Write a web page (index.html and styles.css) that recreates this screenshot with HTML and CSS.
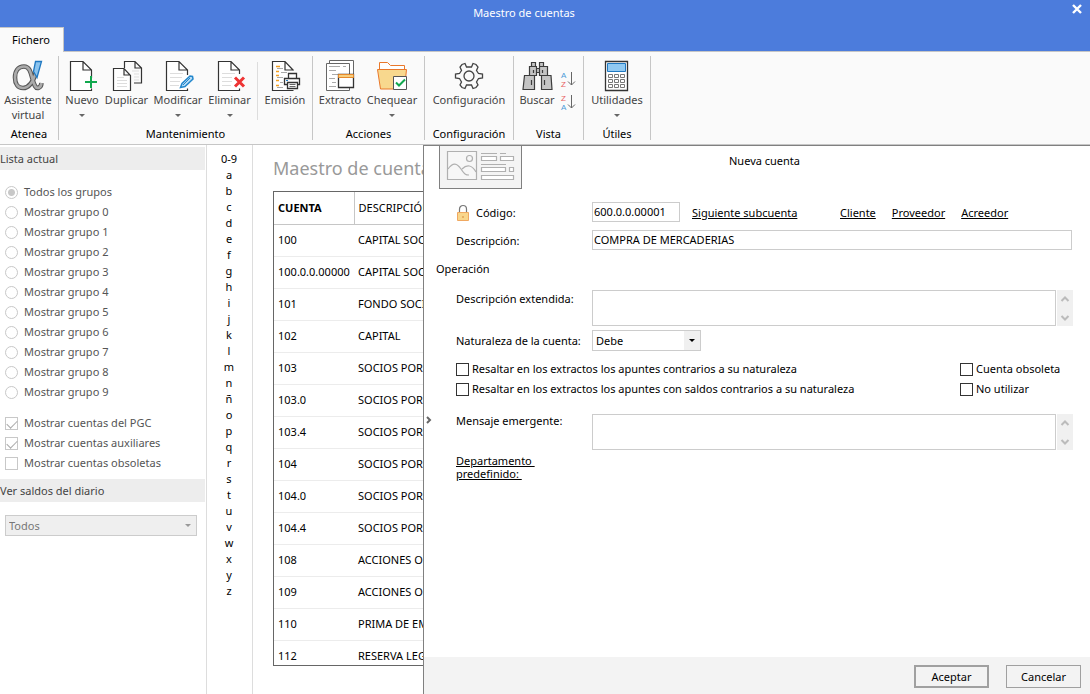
FILE: index.html
```html
<!DOCTYPE html>
<html lang="es">
<head>
<meta charset="utf-8">
<title>Maestro de cuentas</title>
<link rel="stylesheet" href="styles.css">
</head>
<body>
<header class="titlebar">
  <h1 class="window-title">Maestro de cuentas</h1>
  <button class="close" aria-label="Cerrar"><svg width="10" height="10" viewBox="0 0 10 10"><path d="M1 1l8 8M9 1L1 9" stroke="#fff" stroke-width="2.4"/></svg></button>
  <button class="tab">Fichero</button>
</header>

<nav class="ribbon">
  <section class="group g-atenea">
    <div class="tools">
      <button class="tool w-56">
        <svg class="icon" width="32" height="32" viewBox="0 0 32 32" fill="none"><path d="M24 12C22 19 18 28 11 28C6 28 3 24 3 17.500C3 11 6 6.500 12 6.500C20 6.500 19 19 23 26C25 29.500 29 28 29.500 23" stroke="#555" stroke-width="4.600"/><path d="M24 12C22 19 18 28 11 28C6 28 3 24 3 17.500C3 11 6 6.500 12 6.500C20 6.500 19 19 23 26C25 29.500 29 28 29.500 23" stroke="#aaa" stroke-width="2.600"/><path d="M23.500 1.500h6l-4.500 16-3.500-6z" fill="#8cc4ee" stroke="#1f78c1" stroke-width="1.300"/></svg>
        <span>Asistente<br>virtual</span></button>
    </div>
    <h2 class="group-name">Atenea</h2>
  </section>
  <section class="group g-mant">
    <div class="tools">
      <button class="tool w-44">
        <svg class="icon" width="32" height="32" viewBox="0 0 32 32" fill="none"><path d="M25.500 18V10L17 1.500H4.500v29h21v-2M17 2v8h8" stroke="#333" stroke-width="1.200" fill="#fff"/><path d="M25 16v12M19 22h12" stroke="#12a84e" stroke-width="2"/></svg>
        <span>Nuevo</span><i class="caret"></i></button>
      <button class="tool w-45">
        <svg class="icon" width="32" height="32" viewBox="0 0 32 32" fill="none"><path d="M13.500 8V1.500H24L30.500 8v15H23M24 2v6h6" stroke="#333" stroke-width="1.200"/><path d="M21 11h7M23 14h5M23 17h5M23 20h5" stroke="#ddd"/><path d="M2.500 8.500H13l6.500 7v15h-17zM13 9v6h6" stroke="#333" stroke-width="1.200" fill="#fff"/><path d="M6 17.500h7M6 20.500h10M6 23.500h10M6 26.500h10" stroke="#ddd"/></svg>
        <span>Duplicar</span></button>
      <button class="tool w-58">
        <svg class="icon" width="32" height="32" viewBox="0 0 32 32" fill="none"><path d="M25.500 15V10L17 1.500H4.500v29h21v-2M17 2v8h8" stroke="#333" stroke-width="1.200" fill="#fff"/><path d="M8 13.500h13M8 17.500h12M8 21.500h10M8 25.500h9" stroke="#ddd"/><path d="M18.500 27.500l1.500-4 8-7.500 2.500.5.500 2.500-8 7.500z" fill="#b9ddf6" stroke="#2387cc" stroke-width="1.500"/><path d="M21 25l7-7" stroke="#2387cc"/></svg>
        <span>Modificar</span><i class="caret"></i></button>
      <button class="tool w-45">
        <svg class="icon" width="32" height="32" viewBox="0 0 32 32" fill="none"><path d="M25.500 14V10L17 1.500H4.500v29h21v-2M17 2v8h8" stroke="#333" stroke-width="1.200" fill="#fff"/><path d="M8 13.500h13M8 17.500h10M8 21.500h10M8 25.500h9" stroke="#ddd"/><path d="M21 17.500l9 9M30 17.500l-9 9" stroke="#ee3333" stroke-width="3"/></svg>
        <span>Eliminar</span><i class="caret"></i></button>
      <span class="divider"></span>
      <button class="tool w-46">
        <svg class="icon" width="32" height="32" viewBox="0 0 32 32" fill="none"><path d="M24.500 10.500L16 1.500H3.500v29h21M16 2v8h8" stroke="#333" stroke-width="1.200" fill="#fff"/><path d="M7 6.500h4M7 11.500h3M7 15.500h3M7 20.500h3M7 25.500h3" stroke="#f4a021" stroke-width="1.500"/><path d="M8 8.500h6M12 12.500h6M8 17.500h6M11 22.500h3M8 27.500h6" stroke="#aaa"/><path d="M19.500 18v-4.500h8V18M19.500 24.500H15.500v-6h15v6h-3" stroke="#333" stroke-width="1.300" fill="#fff"/><path d="M18.500 22.500h10v6h-10z" fill="#fff" stroke="#333" stroke-width="1.300"/><path d="M20.500 24.500h6M20.500 26.500h6" stroke="#666"/><path d="M17 20.500h2" stroke="#1f78c1"/></svg>
        <span>Emisión</span></button>
    </div>
    <h2 class="group-name">Mantenimiento</h2>
  </section>
  <section class="group g-acc">
    <div class="tools">
      <button class="tool w-44">
        <svg class="icon" width="32" height="32" viewBox="0 0 32 32" fill="none"><path d="M5.500 3.500v-3h24v15M2.500 3.500h23v27h-23z" stroke="#666" fill="#fff"/><path d="M5 6.500h11M19 6.500h3M5 10.500h7M8 14.500h6M5 18.500h6M8 22.500h4M5 26.500h7" stroke="#aaa"/><path d="M14.500 14.500h15v13h-15z" fill="#fff" stroke="#333" stroke-width="1.300"/><path d="M14.500 14.500h15v3h-15z" fill="#f9cf7e" stroke="#e58a2e"/></svg>
        <span>Extracto</span></button>
      <button class="tool w-60">
        <svg class="icon" width="32" height="32" viewBox="0 0 32 32" fill="none"><path d="M3.500 10V2.500h8l3 3h14V10" fill="#fff" stroke="#e9782b"/><path d="M1.500 9.500h29l-2 19.500h-24z" fill="#f8d88e" stroke="#e9782b"/><path d="M17.500 16.500h13v13h-13z" fill="#fff" stroke="#555"/><path d="M20 22.500l3 3 6-6" stroke="#12a84e" stroke-width="2"/></svg>
        <span>Chequear</span><i class="caret"></i></button>
    </div>
    <h2 class="group-name">Acciones</h2>
  </section>
  <section class="group g-conf">
    <div class="tools">
      <button class="tool w-86">
        <svg class="icon" width="32" height="32" viewBox="0 0 32 32" fill="none" stroke="#444" stroke-width="1.300"><path d="M13.500 7L12 3.500 9 4.500l-2 2.500 1.500 3.500-2 3-4 .5v4l4 .5 2 3.500L7 25l2 2.500 3 1 1.500-3.500h5l1.500 3.500 3-1 2-2.500-1.500-3 2-3.500 4-.5v-4l-4-.5-2-3L25 7l-2-2.500-3-1L18.500 7z"/><circle cx="16" cy="16" r="5"/></svg>
        <span>Configuración</span></button>
    </div>
    <h2 class="group-name">Configuración</h2>
  </section>
  <section class="group g-vista">
    <div class="tools">
      <button class="tool w-44">
        <svg class="icon" width="32" height="32" viewBox="0 0 32 32" fill="#c4c4c4" stroke="#3c3c3c" stroke-width="1.200"><path d="M10.500 2.500h4v4h-4zM18.500 2.500h4v4h-4zM8.500 6.500h7v9h-7zM18.500 6.500h8v9h-8zM15.500 8.500h3v4h-3zM3.500 15.500l-1.500 14h11.500v-14zM20.500 15.500v14h10.500l-1-14z"/><path d="M12.500 10v3M21.500 10v3M10.500 20v5M23.500 20v5"/></svg>
        <span>Buscar</span></button>
      <span class="sorts">
        <button class="sort" aria-label="Orden ascendente"><svg width="16" height="19" viewBox="0 0 16 19"><text x="1" y="8" class="az blue">A</text><text x="1" y="17" class="az red">Z</text><path d="M11.500 2v13M8 11.500l3.500 3.500 3.500-3.500" stroke="#666" fill="none"/></svg></button>
        <button class="sort" aria-label="Orden descendente"><svg width="16" height="19" viewBox="0 0 16 19"><text x="1" y="8" class="az red">Z</text><text x="1" y="17" class="az blue">A</text><path d="M11.500 2v13M8 11.500l3.500 3.500 3.500-3.500" stroke="#666" fill="none"/></svg></button>
      </span>
    </div>
    <h2 class="group-name">Vista</h2>
  </section>
  <section class="group g-utiles">
    <div class="tools">
      <button class="tool w-62">
        <svg class="icon" width="32" height="32" viewBox="0 0 32 32" fill="none"><path d="M4.500 1.500h22v29h-22z" fill="#fff" stroke="#333" stroke-width="1.300"/><path d="M6.500 3.500h18v8h-18z" fill="#90c9f2" stroke="#1f78c1"/><path d="M7.500 14.500h4v3h-4zM13.500 14.500h4v3h-4zM19.500 14.500h4v3h-4zM7.500 19.500h4v3h-4zM13.500 19.500h4v3h-4zM19.500 19.500h4v3h-4zM7.500 24.500h4v3h-4zM13.500 24.500h4v3h-4zM19.500 24.500h4v3h-4z" stroke="#777"/></svg>
        <span>Utilidades</span><i class="caret"></i></button>
    </div>
    <h2 class="group-name">Útiles</h2>
  </section>
</nav>

<main class="workspace">
  <aside class="sidebar">
    <h2 class="side-head">Lista actual</h2>
    <div class="options">
      <label><input type="radio" name="g" checked disabled>Todos los grupos</label>
      <label><input type="radio" name="g" disabled>Mostrar grupo 0</label>
      <label><input type="radio" name="g" disabled>Mostrar grupo 1</label>
      <label><input type="radio" name="g" disabled>Mostrar grupo 2</label>
      <label><input type="radio" name="g" disabled>Mostrar grupo 3</label>
      <label><input type="radio" name="g" disabled>Mostrar grupo 4</label>
      <label><input type="radio" name="g" disabled>Mostrar grupo 5</label>
      <label><input type="radio" name="g" disabled>Mostrar grupo 6</label>
      <label><input type="radio" name="g" disabled>Mostrar grupo 7</label>
      <label><input type="radio" name="g" disabled>Mostrar grupo 8</label>
      <label><input type="radio" name="g" disabled>Mostrar grupo 9</label>
    </div>
    <div class="options filters">
      <label><input type="checkbox" checked disabled>Mostrar cuentas del PGC</label>
      <label><input type="checkbox" checked disabled>Mostrar cuentas auxiliares</label>
      <label><input type="checkbox" disabled>Mostrar cuentas obsoletas</label>
    </div>
    <h2 class="side-head" id="saldos">Ver saldos del diario</h2>
    <div class="combo side-combo">
      <select aria-labelledby="saldos" disabled><option>Todos</option></select><i class="caret"></i>
    </div>
  </aside>

  <nav class="letters" aria-label="Índice">
    <a href="#">0-9</a><a href="#">a</a><a href="#">b</a><a href="#">c</a><a href="#">d</a><a href="#">e</a><a href="#">f</a><a href="#">g</a><a href="#">h</a><a href="#">i</a><a href="#">j</a><a href="#">k</a><a href="#">l</a><a href="#">m</a><a href="#">n</a><a href="#">ñ</a><a href="#">o</a><a href="#">p</a><a href="#">q</a><a href="#">r</a><a href="#">s</a><a href="#">t</a><a href="#">u</a><a href="#">v</a><a href="#">w</a><a href="#">x</a><a href="#">y</a><a href="#">z</a>
  </nav>

  <section class="list">
    <h2 class="list-title">Maestro de cuentas</h2>
    <div class="table-box">
      <table>
        <thead><tr><th class="sorted">CUENTA</th><th>DESCRIPCIÓN</th></tr></thead>
        <tbody>
          <tr><td>100</td><td>CAPITAL SOCIAL</td></tr>
          <tr><td>100.0.0.00000</td><td>CAPITAL SOCIAL</td></tr>
          <tr><td>101</td><td>FONDO SOCIAL</td></tr>
          <tr><td>102</td><td>CAPITAL</td></tr>
          <tr><td>103</td><td>SOCIOS POR</td></tr>
          <tr><td>103.0</td><td>SOCIOS POR</td></tr>
          <tr><td>103.4</td><td>SOCIOS POR</td></tr>
          <tr><td>104</td><td>SOCIOS POR</td></tr>
          <tr><td>104.0</td><td>SOCIOS POR</td></tr>
          <tr><td>104.4</td><td>SOCIOS POR</td></tr>
          <tr><td>108</td><td>ACCIONES O</td></tr>
          <tr><td>109</td><td>ACCIONES O</td></tr>
          <tr><td>110</td><td>PRIMA DE EMISIÓN</td></tr>
          <tr><td>112</td><td>RESERVA LEGAL</td></tr>
        </tbody>
      </table>
    </div>
  </section>

  <form class="panel">
    <button type="button" class="handle" aria-label="Ocultar panel"><svg width="7" height="8" viewBox="0 0 7 8"><path d="M1 1l3 3-3 3" stroke="#666" stroke-width="2" fill="none"/></svg></button>
    <div class="panel-top">
      <button type="button" class="card" aria-label="Ficha"><svg width="82" height="43" viewBox="0 0 82 43" fill="none" stroke="#b0b0b0" stroke-width="1.200"><path d="M7.500 6.500h29v28h-29z" fill="#f7f7f7"/><circle cx="29.500" cy="13.500" r="3"/><path d="M8 24c5-7 9-6 13 0s5 6 8 6M22 24c5-5 10-4 14 3"/><path d="M41 8.500h16M60 8.500h6M41 19.500h25"/><path d="M41.500 11.500h15v4h-15zM60.500 11.500h13v4h-13zM41.500 22.500h24v4h-24zM69.500 22.500h4v4h-4zM41.500 30.500h32v4h-32z" fill="#fff"/></svg></button>
      <h2 class="panel-title">Nueva cuenta</h2>
    </div>
    <div class="fields">
      <div class="row single">
        <label for="codigo" class="lock-label"><svg width="14" height="18" viewBox="0 0 14 18"><path d="M3.500 8V5a3.500 3.500 0 0 1 7 0v3" fill="none" stroke="#777" stroke-width="1.200"/><path d="M1.500 8.500h11v8h-11z" fill="#f9d68b" stroke="#f0a860"/><path d="M7 12v2" stroke="#d58a3a"/></svg>Código:</label>
        <input id="codigo" class="box code" type="text" value="600.0.0.00001">
        <a href="#" class="next">Siguiente subcuenta</a>
        <span class="links"><a href="#">Cliente</a><a href="#">Proveedor</a><a href="#">Acreedor</a></span>
      </div>
      <div class="row single">
        <label for="desc">Descripción:</label>
        <input id="desc" class="box wide" type="text" value="COMPRA DE MERCADERIAS">
      </div>
      <h3 class="section-name">Operación</h3>
      <div class="row tall">
        <label for="ext">Descripción extendida:</label>
        <textarea id="ext" class="box"></textarea>
        <span class="scroller"><svg width="10" height="6" viewBox="0 0 10 6"><path d="M1.500 5L5 1.500 8.500 5"/></svg><svg width="10" height="6" viewBox="0 0 10 6"><path d="M1.500 1L5 4.500 8.500 1"/></svg></span>
      </div>
      <div class="row nature">
        <label for="nat">Naturaleza de la cuenta:</label>
        <div class="combo nat-combo"><select id="nat"><option>Debe</option></select><i class="caret"></i></div>
      </div>
      <div class="checks">
        <label><input type="checkbox">Resaltar en los extractos los apuntes contrarios a su naturaleza</label>
        <label><input type="checkbox">Cuenta obsoleta</label>
        <label><input type="checkbox">Resaltar en los extractos los apuntes con saldos contrarios a su naturaleza</label>
        <label><input type="checkbox">No utilizar</label>
      </div>
      <div class="row tall">
        <label for="msg">Mensaje emergente:</label>
        <textarea id="msg" class="box"></textarea>
        <span class="scroller"><svg width="10" height="6" viewBox="0 0 10 6"><path d="M1.500 5L5 1.500 8.500 5"/></svg><svg width="10" height="6" viewBox="0 0 10 6"><path d="M1.500 1L5 4.500 8.500 1"/></svg></span>
      </div>
      <a href="#" class="dept">Departamento&nbsp;<br>predefinido:&nbsp;</a>
    </div>
    <footer class="actions">
      <button type="button" class="btn primary">Aceptar</button>
      <button type="button" class="btn">Cancelar</button>
    </footer>
  </form>
</main>
</body>
</html>
```
FILE: styles.css
```css
* { box-sizing: border-box; }

body {
  margin: 0;
  height: 100vh;
  display: flex;
  flex-direction: column;
  overflow: hidden;
  background: #fff;
  color: #000;
  font: 11px/16px "Noto Sans", "Open Sans", sans-serif;
}

h1, h2, h3 { margin: 0; font-size: inherit; font-weight: normal; }
button, input, select, textarea { font: inherit; color: inherit; margin: 0; }
button { border: 0; background: none; padding: 0; }
a { color: inherit; }
svg { display: block; }

/* Title bar */
.titlebar {
  display: grid;
  grid-template-columns: 64px 1fr 64px;
  grid-template-rows: 27px 24px;
  background: #4c7cdc;
  border-bottom: 1px solid #c6c6c6;
}
.window-title {
  grid-column: 1 / 4;
  grid-row: 1;
  padding: 5px 42px 0 0;
  text-align: center;
  color: #fff;
}
.close { grid-column: 3; grid-row: 1; justify-self: end; align-self: start; padding: 4px 8px; }
.tab {
  grid-row: 2;
  margin-bottom: -1px;
  padding-right: 1px;
  background: #fafafa;
  border: 1px solid #c6c6c6;
  border-width: 1px 1px 0 0;
}

/* Ribbon */
.ribbon {
  display: flex;
  padding: 4px 0;
  background: #fafafa;
  border-bottom: 1px solid #c6c6c6;
}
.group {
  display: flex;
  flex-direction: column;
  border-right: 1px solid #c6c6c6;
  height: 84px;
  justify-content: space-between;
}
.tools { display: flex; align-items: flex-start; }
.group-name { text-align: center; line-height: 12px; }
.g-atenea { width: 59px; }
.g-mant { width: 254px; }
.g-mant .tools { padding-left: 1px; }
.g-acc { width: 112px; }
.g-acc .tools { padding-left: 5px; }
.g-conf { width: 89px; }
.g-conf .tools { padding-left: 1px; }
.g-vista { width: 70px; }
.g-vista .tools { padding-left: 1px; }
.g-utiles { width: 67px; }
.g-utiles .tools { padding-left: 2px; }
.tool {
  display: flex;
  flex-direction: column;
  align-items: center;
  color: #444;
  line-height: 15px;
  padding-top: 4px;
  white-space: nowrap;
}
.w-44 { width: 44px; }
.w-45 { width: 45px; }
.w-46 { width: 46px; }
.w-56 { width: 56px; }
.w-58 { width: 58px; }
.w-60 { width: 60px; }
.w-62 { width: 62px; }
.w-86 { width: 86px; }
.divider { width: 1px; height: 58px; margin: 6px 4px 0 5px; background: #ddd; }
.caret {
  border: 3px solid transparent;
  border-top-color: #666;
  border-bottom: 0;
  width: 0;
  height: 0;
}
.tool .caret { margin-top: 7px; }
.sorts { display: flex; flex-direction: column; gap: 4px; padding: 14px 0 0 1px; }
.az { font: 8px "Liberation Sans", sans-serif; }
.blue { fill: #4a9bd8; }
.red { fill: #e86060; }

/* Work area */
.workspace { flex: 1; display: flex; min-height: 0; }
.sidebar { width: 207px; border-right: 1px solid #ddd; padding: 2px 1px 0 0; color: #555; }
.side-head { background: #ededed; line-height: 23px; color: #444; }
.options { display: flex; flex-direction: column; padding: 12px 5px 0; }
.options label { display: flex; align-items: center; gap: 6px; height: 20px; }
.filters { padding: 11px 5px 6px; }

input[type="radio"], input[type="checkbox"] {
  appearance: none;
  flex: none;
  width: 13px;
  height: 13px;
  border: 1px solid #333;
  background: #fff;
}
.options input[type="radio"], .options input[type="checkbox"] { border-color: #c8c8c8; }
input[type="radio"] { border-radius: 50%; }
input[type="radio"]:checked { background: radial-gradient(circle, #c8c8c8 0 3px, #fff 4px); }
.options input[type="checkbox"]:checked::after {
  content: "";
  display: block;
  width: 9px;
  height: 5px;
  margin: 2px 1px;
  border: solid #aaa;
  border-width: 0 0 1px 1px;
  transform: rotate(-45deg);
}

.combo { display: grid; grid-template-columns: 1fr 16px; border: 1px solid #ccc; }
.combo select {
  grid-area: 1 / 1 / 2 / 3;
  appearance: none;
  border: 0;
  border-radius: 0;
  background: none;
  padding: 0 3px;
  opacity: 1;
}
.combo .caret { grid-area: 1 / 2; place-self: center; pointer-events: none; }
.side-combo { margin: 13px 8px 0 5px; height: 21px; background: #efefef; color: #777; }
.side-combo .caret { border-top-color: #999; }

.letters { width: 46px; border-right: 1px solid #ddd; display: flex; flex-direction: column; padding: 6px 1px 0 0; }
.letters a { text-align: center; text-decoration: none; height: 16px; }

.list { width: 170px; padding: 11px 0 28px 20px; display: flex; flex-direction: column; overflow: hidden; white-space: nowrap; }
.list-title { font-size: 18px; line-height: 24px; color: #999; margin-bottom: 11px; }
.table-box { flex: 1; min-height: 0; overflow: hidden; border: 1px solid #666; border-right: 0; }
table { border-collapse: collapse; table-layout: fixed; width: 240px; }
th, td { height: 32px; padding: 0 4px; text-align: left; font-weight: normal; border-bottom: 1px solid #ececec; }
th { border-bottom-color: #c6c6c6; }
th.sorted { width: 80px; font-weight: bold; border-right: 1px solid #c6c6c6; }

/* Account form */
.panel {
  flex: 1;
  position: relative;
  display: flex;
  flex-direction: column;
  border: solid #808080;
  border-width: 1px 0 0 1px;
  background: #fff;
}
.handle { position: absolute; left: 2px; top: 50%; margin-top: -4px; }
.panel-top { display: grid; grid-template-columns: 1fr; padding-left: 15px; }
.card { grid-area: 1 / 1; justify-self: start; background: #f4f4f4; border: 1px solid #808080; border-top: 0; width: 83px; height: 43px; }
.card svg { margin-top: -1px; }
.panel-title { grid-area: 1 / 1; text-align: center; padding: 7px 0 0; }
.fields { flex: 1; padding: 13px 17px 0 32px; }
.row { display: flex; margin-bottom: 8px; }
.single { height: 20px; }
.row > label { width: 136px; line-height: 22px; height: 20px; }
.row .lock-label { display: flex; gap: 6px; }
.lock-label svg { margin-top: 2px; }
.box { border: 1px solid #ccc; border-radius: 0; background: #fff; padding: 0 1px 2px; height: 20px; outline: 0; }
.code { width: 88px; }
.wide { flex: 1; margin-right: 1px; }
.next { margin-left: 12px; line-height: 22px; width: 148px; }
.links { display: flex; gap: 16px; line-height: 22px; }
.section-name { margin: 11px 0 13px -20px; }
.tall textarea { flex: 1; height: 36px; resize: none; }
.tall > label { height: 36px; line-height: 18px; }
.row.tall { margin-bottom: 4px; }
.scroller { width: 16px; margin-left: 1px; background: #f0f0f0; display: flex; flex-direction: column; justify-content: space-between; align-items: center; padding: 6px 0 5px; }
.scroller path { fill: none; stroke: #bbb; stroke-width: 2; }
.nat-combo { width: 109px; height: 21px; background: linear-gradient(#f0f0f0, #f0f0f0) right / 16px 100% no-repeat; }
.nat-combo .caret { border-top-color: #000; }
.checks { display: grid; grid-template-columns: 504px 1fr; grid-auto-rows: 20px; margin-bottom: 15px; }
.checks label { display: flex; align-items: center; gap: 3px; white-space: nowrap; }
.checks + .tall > label { line-height: 14px; }
.dept { display: inline-block; line-height: 13px; }
.actions { display: flex; justify-content: flex-end; align-items: flex-start; gap: 17px; background: #f3f3f3; height: 37px; padding: 8px 9px 0 0; }
.btn { width: 75px; height: 23px; border: 1px solid #a0a0a0; }
.primary { border-width: 2px; }
```
